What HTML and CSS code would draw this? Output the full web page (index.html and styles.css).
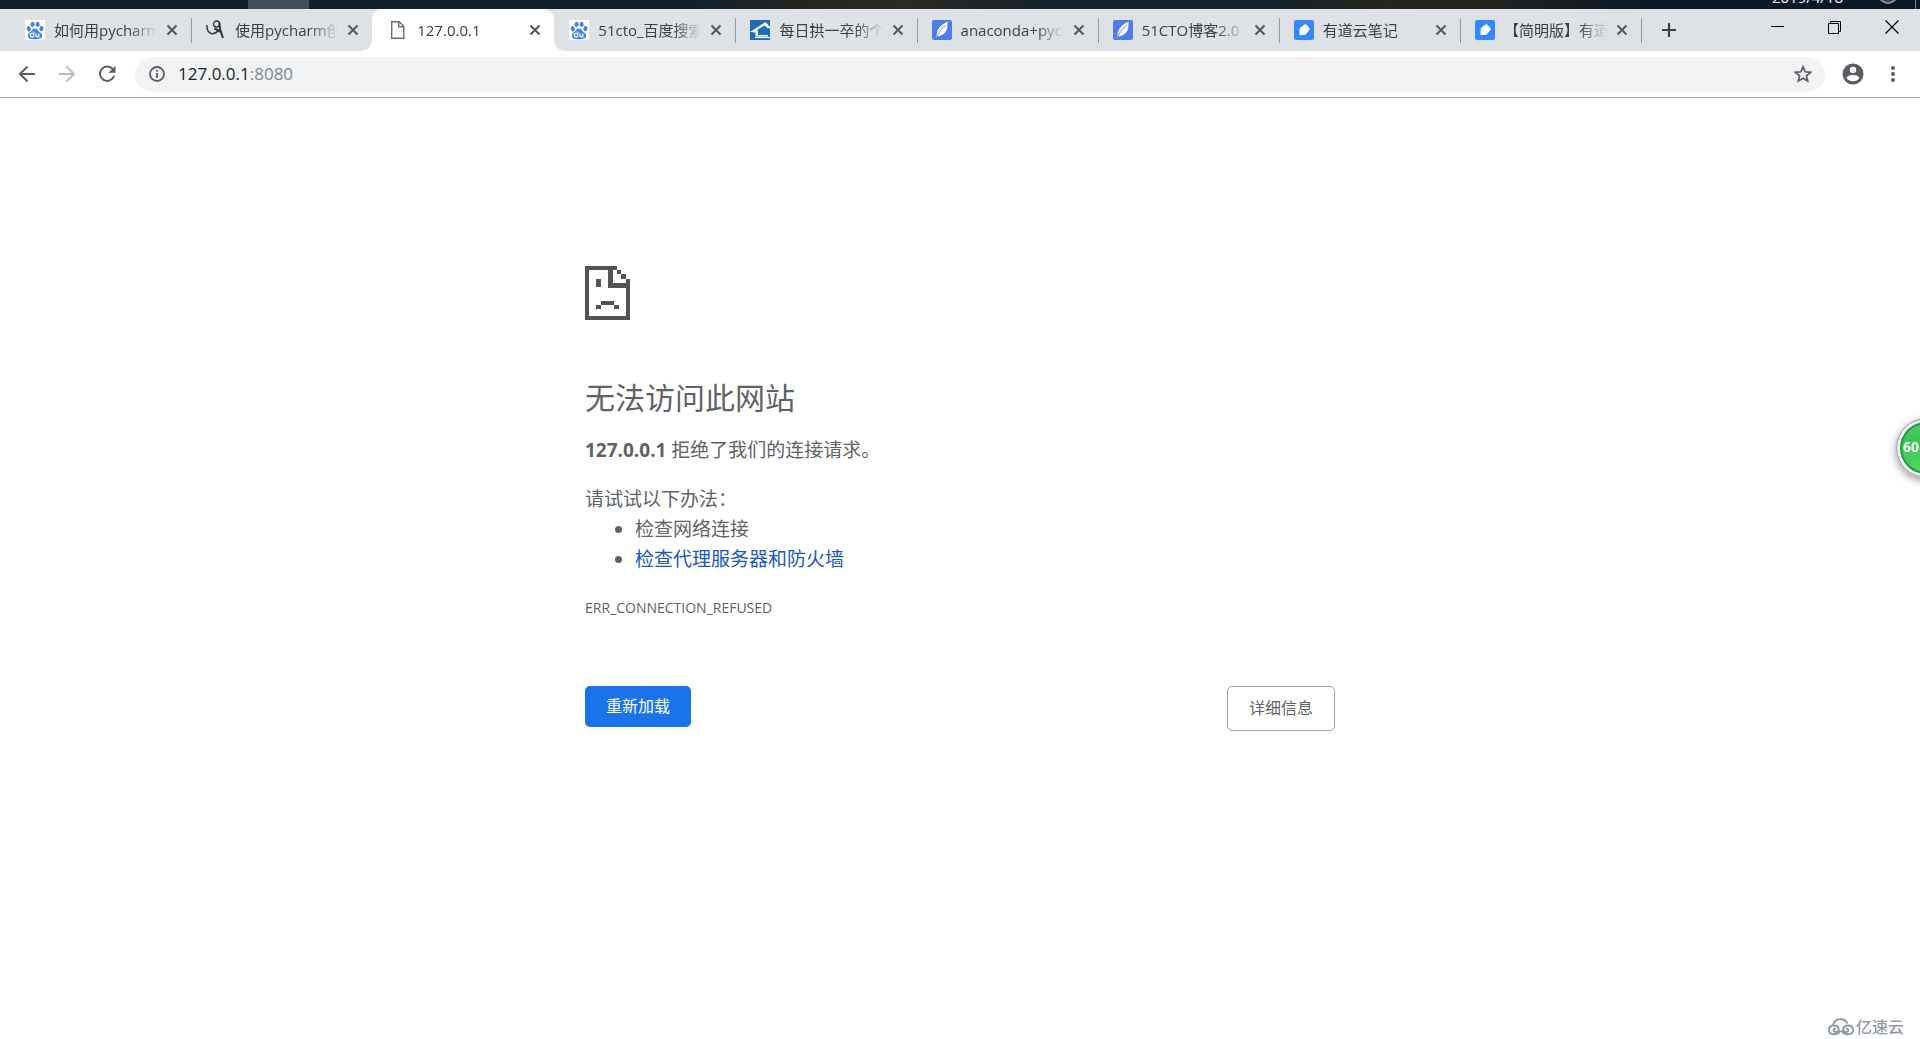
FILE: index.html
```html
<!DOCTYPE html>
<html lang="zh-CN">
<head>
<meta charset="utf-8">
<title>127.0.0.1</title>
<link rel="stylesheet" href="styles.css">
</head>
<body>
<svg width="0" height="0" class="defs" aria-hidden="true">
  <symbol id="close" viewBox="0 0 12 12"><path d="M1.500 1.500l9 9M10.500 1.500l-9 9" stroke="currentColor" stroke-width="2" fill="none"/></symbol>
  <symbol id="paw" viewBox="0 0 20 20"><rect width="20" height="20" fill="#fff"/><g fill="#3b82ec"><ellipse cx="3.800" cy="8.800" rx="2" ry="2.600" transform="rotate(-12 3.800 8.800)"/><ellipse cx="7.600" cy="4.300" rx="2" ry="2.600"/><ellipse cx="12.600" cy="4.300" rx="2" ry="2.600"/><ellipse cx="16.400" cy="8.600" rx="2" ry="2.600" transform="rotate(12 16.400 8.600)"/><path d="M10 8.400c1.900 0 2.600 1.700 4 3 1.500 1.300 3.500 2.700 3.200 4.900-.4 2.400-2.700 2.900-7.200 2.900s-6.800-.5-7.200-2.900c-.3-2.200 1.700-3.600 3.200-4.900 1.400-1.300 2.100-3 4-3z"/></g><path d="M8.700 11.500v5.300H7a1.700 1.700 0 1 1 1.700-1.700M11 13.300v2.200q0 1.300 1.300 1.300h1.500v-3.500" stroke="#fff" stroke-width="1.200" fill="none"/></symbol>
  <symbol id="feather" viewBox="0 0 20 20"><rect width="20" height="20" rx="2" fill="#4f7de9"/><path d="M15.700 1.500C9 4.500 5 9 4.700 14.500L3.500 18l1.300-1.400c5-.5 9.500-3.500 10.400-8.600z" fill="#fff"/><path d="M4.200 17.500C7 12 9.500 9 13.500 5" stroke="#4f7de9" stroke-width=".9" fill="none"/></symbol>
  <symbol id="note" viewBox="0 0 20 20"><rect width="20" height="20" rx="2" fill="#3487ff"/><path d="M6 8l4.500-3.400q1-.7 1.900.2l3 3.200q.8.900.1 1.800l-3.400 4.300q-.5.600-1.200.7l-4.600.5q-.9.100-.8-.8L5.600 9q0-.7.400-1z" fill="#fff"/></symbol>
</svg>

<div class="desktop">
  <span class="date">2019/4/18</span>
  <span class="tray"></span>
  <span class="edge"></span>
</div>

<header>
  <div class="tabstrip">
    <nav class="tabs">
      <div class="tab"><svg class="fav"><use href="#paw"/></svg><span class="title">如何用pycharm创建</span><button class="x" aria-label="关闭"><svg><use href="#close"/></svg></button></div>
      <div class="tab before"><svg class="fav" viewBox="0 0 20 20"><g fill="none" stroke="#333"><path d="M1 5q-.5 7 4 8.500Q9 14.500 13 10" stroke-width="1.500"/><circle cx="10.500" cy="4" r="3" stroke-width="1.300"/><path d="M13.500 2.500q-.5 5 3.500 15.500M8.500 8.500L15 12" stroke-width="2"/></g></svg><span class="title">使用pycharm创建</span><button class="x" aria-label="关闭"><svg><use href="#close"/></svg></button></div>
      <div class="tab active"><svg class="fav" viewBox="0 0 20 20"><path d="M3.700 1.700h7.600l4.500 4.600v12H3.700zM10.800 2v4.800h4.700" fill="none" stroke="#6b6e72" stroke-width="1.400"/></svg><span class="title">127.0.0.1</span><button class="x" aria-label="关闭"><svg><use href="#close"/></svg></button></div>
      <div class="tab"><svg class="fav"><use href="#paw"/></svg><span class="title">51cto_百度搜索</span><button class="x" aria-label="关闭"><svg><use href="#close"/></svg></button></div>
      <div class="tab"><svg class="fav" viewBox="0 0 20 20"><rect width="20" height="20" fill="#1b6db8"/><path d="M0 12L15.500 2 20 7v2l-2-1.500v9H5.500V12.500z" fill="#fff"/><path d="M7 10l7.500-4.500L18 8.500V15H8v-4z" fill="#1b6db8"/><path d="M5 17.500h15" stroke="#fff" stroke-width="1.200"/></svg><span class="title">每日拱一卒的个人</span><button class="x" aria-label="关闭"><svg><use href="#close"/></svg></button></div>
      <div class="tab"><svg class="fav"><use href="#feather"/></svg><span class="title">anaconda+pycharm</span><button class="x" aria-label="关闭"><svg><use href="#close"/></svg></button></div>
      <div class="tab"><svg class="fav"><use href="#feather"/></svg><span class="title">51CTO博客2.0</span><button class="x" aria-label="关闭"><svg><use href="#close"/></svg></button></div>
      <div class="tab"><svg class="fav"><use href="#note"/></svg><span class="title">有道云笔记</span><button class="x" aria-label="关闭"><svg><use href="#close"/></svg></button></div>
      <div class="tab"><svg class="fav"><use href="#note"/></svg><span class="title">【简明版】有道云</span><button class="x" aria-label="关闭"><svg><use href="#close"/></svg></button></div>
    </nav>
    <button class="newtab" aria-label="新标签页"><svg width="16" height="16" viewBox="0 0 16 16"><path d="M8 1v14M1 8h14" stroke="#3c4043" stroke-width="2.200"/></svg></button>
    <div class="winctl">
      <button aria-label="最小化"><svg width="14" height="14" viewBox="0 0 14 14"><path d="M0 6.500h13" stroke="#000"/></svg></button>
      <button aria-label="还原"><svg width="14" height="14" viewBox="0 0 14 14"><path d="M.5 3.500h10v10H.5zM2.500 3.500v-2h10v10h-2" fill="none" stroke="#000"/></svg></button>
      <button aria-label="关闭窗口"><svg width="14" height="14" viewBox="0 0 14 14"><path d="M.5.500l13 13M13.500.500l-13 13" stroke="#000" stroke-width="1.200"/></svg></button>
    </div>
  </div>
  <div class="toolbar">
    <button class="tool" aria-label="后退"><svg width="18" height="18" viewBox="0 0 18 18"><path d="M17 9H2M9.500 1.500L2 9l7.500 7.500" fill="none" stroke="#5a5d61" stroke-width="2"/></svg></button>
    <button class="tool" aria-label="前进"><svg width="18" height="18" viewBox="0 0 18 18"><path d="M1 9h15M8.500 1.500L16 9l-7.500 7.500" fill="none" stroke="#bcbec1" stroke-width="2"/></svg></button>
    <button class="tool" aria-label="重新加载此页"><svg width="18" height="18" viewBox="0 0 18 18"><path d="M14.800 4.200A7.200 7.200 0 1 0 16 11" fill="none" stroke="#5a5d61" stroke-width="2"/><path d="M17.500.800v7h-7z" fill="#5a5d61"/></svg></button>
    <div class="omnibox">
      <svg width="16" height="16" viewBox="0 0 16 16"><circle cx="8" cy="8" r="7" fill="none" stroke="#5a5d61" stroke-width="1.800"/><path d="M8 7v5M8 4v1.800" stroke="#5a5d61" stroke-width="1.800"/></svg>
      <a class="url" href="http://127.0.0.1:8080">127.0.0.1<span>:8080</span></a>
      <button class="star" aria-label="收藏"><svg width="18" height="18" viewBox="0 0 18 18"><path d="M9 1.800l2.100 5 5.400.500-4.100 3.500 1.300 5.300L9 13.300l-4.700 2.800 1.300-5.300L1.500 7.300l5.400-.500z" fill="none" stroke="#5a5d61" stroke-width="1.700"/></svg></button>
    </div>
    <button class="tool" aria-label="用户"><svg width="22" height="22" viewBox="0 0 22 22"><circle cx="11" cy="11" r="10.500" fill="#5a5d61"/><circle cx="11" cy="7" r="3.200" fill="#fff"/><path d="M4.500 15q1.300-3 6.500-3t6.500 3q-2.300 3.300-6.500 3.300T4.500 15z" fill="#fff"/></svg></button>
    <button class="tool" aria-label="菜单"><svg width="18" height="18" viewBox="0 0 18 18" fill="#5a5d61"><circle cx="9" cy="3" r="2"/><circle cx="9" cy="9" r="2"/><circle cx="9" cy="15" r="2"/></svg></button>
  </div>
</header>

<main>
  <svg class="sad" width="45" height="54" viewBox="0 0 45 54" shape-rendering="crispEdges"><path fill="#535353" d="M0 0h32v4H4v46h37V22H23V4h5v13h13v-4h4v41H0zM32 4h4v4h-4zM36 8h5v5h-5zM11 13h5v8h-5zM16 35h13v4H16zM11 39h5v4h-5zM29 39h5v4h-5z"/></svg>
  <h1>无法访问此网站</h1>
  <p><strong>127.0.0.1</strong> 拒绝了我们的连接请求。</p>
  <div class="suggest">
    <p>请试试以下办法：</p>
    <ul>
      <li>检查网络连接</li>
      <li><a href="#buttons">检查代理服务器和防火墙</a></li>
    </ul>
  </div>
  <div class="code">ERR_CONNECTION_REFUSED</div>
  <div class="buttons" id="buttons">
    <button class="reload">重新加载</button>
    <button class="details">详细信息</button>
  </div>
</main>

<div class="ball">60</div>
<div class="mark">
  <svg width="26" height="18" viewBox="0 0 26 18"><path d="M5 7.500Q6 1.200 12.500 1.200q5 0 7 4.300M12.500 12.500C10 17.500 1 17.500 1 12q0-4.500 5-4.500c6 0 6 7 1.500 6.500-3-.5-2-4 .5-3M13.500 12.500c2.500 5 11.500 5 11.500-.5q0-4.500-5-4.500c-6 0-6 7-1.500 6.500 3-.5 2-4-.5-3" fill="none" stroke="#929aa5" stroke-width="1.900"/></svg>
  <span>亿速云</span>
</div>
</body>
</html>
```
FILE: styles.css
```css
* { box-sizing: border-box; }

body {
  margin: 0;
  min-height: 100vh;
  background: #fff;
  color: #5f6368;
  font-family: "Open Sans", "Noto Sans CJK SC", sans-serif;
}

button {
  margin: 0;
  padding: 0;
  border: 0;
  background: none;
  font: inherit;
  color: inherit;
}

svg { display: block; flex: none; }
.defs { position: absolute; }

/* Sliver of the desktop above the window */
.desktop {
  display: flex;
  justify-content: flex-end;
  align-items: flex-end;
  height: 9px;
  overflow: hidden;
  color: #fff;
  font-size: 15px;
  line-height: 24px;
  background:
    linear-gradient(#434e59, #434e59) 248px 0 / 61px 9px no-repeat,
    linear-gradient(90deg, #12202d 0 36%, #26251f 42%, #2c2a25 47%, #14202b 55% 66%, #26251f 72%, #23231f 77%, #0b1827 86%);
}
.date { margin-right: 35px; }
.tray {
  width: 20px;
  height: 20px;
  margin: 0 17px 5px 0;
  border: 2px solid #8e9297;
  border-radius: 50%;
  background: #34393f;
}
.edge { width: 5px; height: 9px; border-left: 1px solid #7b828a; }

/* Tab strip */
.tabstrip {
  display: flex;
  height: 42px;
  padding-left: 10px;
  background: #dee1e6;
}
.tabs { display: flex; flex: 0 1 1631px; min-width: 0; }
.tab {
  position: relative;
  display: flex;
  flex: 1 1 0;
  min-width: 0;
  align-items: center;
  padding: 0 13px 0 15px;
  color: #3c4043;
  font-size: 15px;
}
.tab::after {
  content: "";
  position: absolute;
  right: -1px;
  top: 9px;
  width: 1px;
  height: 25px;
  background: #96999e;
}
.tab.before::after { display: none; }
.tab.active { padding-left: 16px; background: #fff; border-radius: 10px 10px 0 0; }
.tab.active::before,
.tab.active::after {
  content: "";
  position: absolute;
  top: auto;
  bottom: 0;
  width: 10px;
  height: 10px;
}
.tab.active::before { left: -10px; background: radial-gradient(circle at 0 0, #dee1e6 9px, #fff 10px); }
.tab.active::after { right: -10px; background: radial-gradient(circle at 100% 0, #dee1e6 9px, #fff 10px); }
.fav { width: 20px; height: 20px; }
.title {
  flex: 1;
  min-width: 0;
  margin: 0 9px;
  line-height: 24px;
  white-space: nowrap;
  overflow: hidden;
  -webkit-mask-image: linear-gradient(90deg, #000 calc(100% - 28px), transparent);
  mask-image: linear-gradient(90deg, #000 calc(100% - 28px), transparent);
}
.x { color: #55585d; }
.x svg { width: 12px; height: 12px; }
.newtab { width: 55px; display: grid; place-items: center; }
.winctl { display: flex; margin-left: auto; padding-bottom: 6px; }
.winctl button { width: 57px; display: grid; place-items: center; }

/* Toolbar */
.toolbar {
  display: flex;
  align-items: center;
  height: 47px;
  padding: 0 7px;
  border-bottom: 1px solid #a9abad;
}
.tool { width: 40px; height: 36px; display: grid; place-items: center; }
.omnibox {
  display: flex;
  flex: 1;
  align-items: center;
  gap: 13px;
  height: 35px;
  margin: 0 8px;
  padding: 0 13px 0 14px;
  border-radius: 18px;
  background: #f1f3f4;
}
.url { flex: 1; color: #202124; font-size: 17px; line-height: 24px; text-decoration: none; }
.url span { color: #80868b; }

/* Error page */
main {
  width: 750px;
  max-width: 100%;
  margin: 0 auto;
  padding-top: 168px;
  font-size: 19px;
  line-height: 30px;
}
h1 { margin: 58px 0 17px; font-size: 30px; line-height: 40px; font-weight: 400; }
p { margin: 0; }
.suggest { margin-top: 19px; }
ul { margin: 0; padding-left: 50px; }
a { color: #1a56c8; text-decoration: none; }
.code { margin-top: 19px; font-size: 14px; }
.buttons { display: flex; justify-content: space-between; align-items: flex-start; margin-top: 63px; font-size: 16px; line-height: 21px; }
.reload { padding: 10px 21px; border-radius: 5px; background: #1a73e8; color: #fff; }
.details { padding: 11px 21px; border: 1px solid #9aa0a6; border-radius: 5px; }

/* Floating system ball, half off the screen */
.ball {
  position: fixed;
  top: 418px;
  right: -36px;
  width: 60px;
  height: 60px;
  padding-left: 6px;
  border: 1px solid #a5a8ab;
  border-radius: 50%;
  background: radial-gradient(circle at 50% 120%, #5fe06c, #3cc455 70%, #63d777);
  box-shadow: inset 0 0 0 3px #f2f4f5, inset 0 0 0 5px #23984a, 0 3px 8px #0006;
  color: #fff;
  font: bold 14px/56px "Open Sans", sans-serif;
}

/* Watermark */
.mark {
  position: fixed;
  right: 16px;
  bottom: 2px;
  display: flex;
  align-items: center;
  gap: 2px;
  color: #929aa5;
  font-size: 16px;
  font-weight: 500;
  line-height: 20px;
}
```
